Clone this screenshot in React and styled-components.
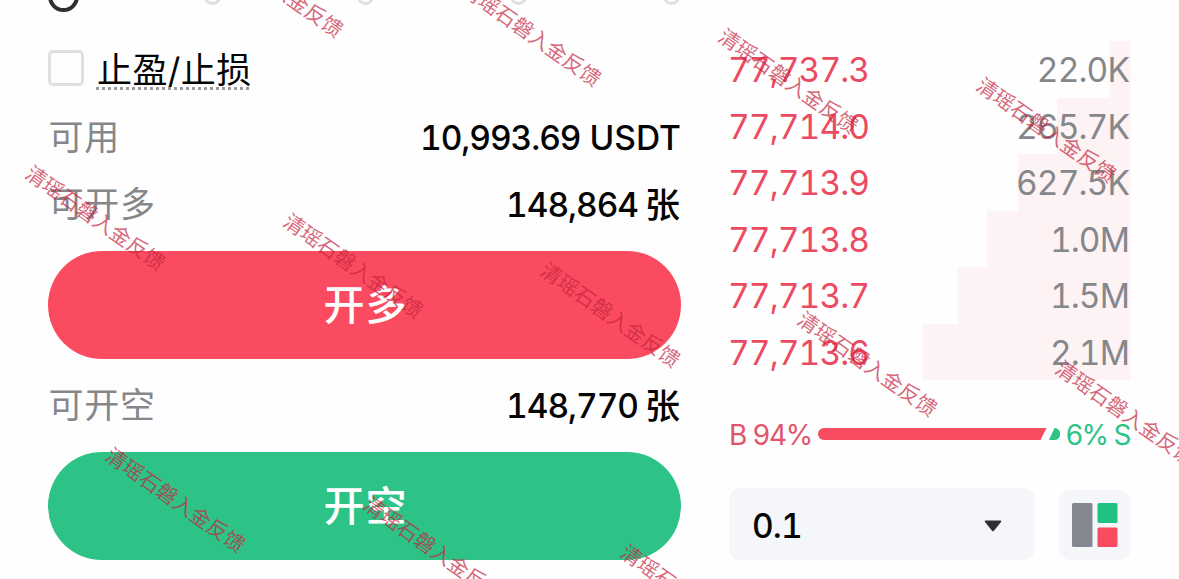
import React from "react";
import styled, { createGlobalStyle } from "styled-components";

const GlobalStyle = createGlobalStyle`
  * {
    box-sizing: border-box;
  }
  body {
    margin: 0;
    background: #fefefe;
    font-family: Inter, "Noto Sans CJK SC", sans-serif;
    overflow: hidden;
  }
`;

const Container = styled.div`
  position: relative;
  width: 1179px;
  height: 579px;
  display: flex;
  gap: 48px;
  padding-left: 48px;
  overflow: hidden;
`;

const OrderForm = styled.div`
  width: 633px;
  display: flex;
  flex-direction: column;
`;

const Steps = styled.div`
  height: 30px;
  margin-top: -18.5px;
  display: flex;
  align-items: center;
  gap: 136px;
`;

const Thumb = styled.div`
  width: 31px;
  height: 31px;
  margin-right: -11.5px;
  border: 4px solid #2e2e33;
  border-radius: 50%;
`;

const Step = styled.div`
  width: 17px;
  height: 17px;
  border: 3px solid #dedfe1;
  border-radius: 50%;
`;

const CheckRow = styled.label`
  height: 37px;
  margin-top: 38px;
  display: flex;
  align-items: center;
  gap: 12px;
`;

const Checkbox = styled.span`
  width: 36px;
  height: 36px;
  border: 3px solid #e0e0e0;
  border-radius: 5px;
`;

const CheckLabel = styled.span`
  width: 153px;
  height: 38px;
  margin-top: 6px;
  padding-left: 1px;
  font-size: 35px;
  line-height: 37px;
  letter-spacing: 0.4px;
  white-space: nowrap;
  color: #050505;
  background: repeating-linear-gradient(
      90deg,
      #9a9b9e 0 3px,
      transparent 3px 6px
    )
    0 100% / 100% 3px no-repeat;
`;

const InfoRow = styled.div`
  height: 67px;
  margin-top: ${(props) => props.$top || 0}px;
  display: flex;
  align-items: center;
  justify-content: space-between;
`;

const Label = styled.span`
  padding-left: 0.5px;
  font-size: 35px;
  line-height: 1;
  letter-spacing: 0.8px;
  color: #85878b;
`;

const Value = styled.span`
  display: flex;
  align-items: center;
  gap: ${(props) => props.$gap || 9}px;
  padding: 2px ${(props) => props.$right || 0}px 0 0;
  font-size: 33.5px;
  line-height: 1;
  font-weight: 500;
  letter-spacing: -1.05px;
  font-feature-settings: "tnum";
  color: #050505;
`;

const Unit = styled.span`
  font-size: ${(props) => props.$size || 33.5}px;
  letter-spacing: 0;
`;

const Submit = styled.button`
  height: 108px;
  margin: ${(props) => props.$top}px 0 0;
  padding: 1px 0 0 2px;
  border: none;
  border-radius: 54px;
  background: ${(props) => props.$bg};
  color: white;
  font-family: inherit;
  font-size: 41px;
  font-weight: 500;
  line-height: 1;
  letter-spacing: 1px;
`;

const Book = styled.div`
  width: 402px;
  padding-top: 41px;
  display: flex;
  flex-direction: column;
`;

const BookRow = styled.div`
  height: 56.5px;
  padding: 3px 2px 0 0;
  display: flex;
  align-items: center;
  justify-content: space-between;
  font-size: 33.5px;
  line-height: 1;
  letter-spacing: -0.9px;
  font-feature-settings: "tnum";
  background: linear-gradient(#fdf2f4, #fdf2f4) 100% 0 /
    ${(props) => props.$depth}px 100% no-repeat;
`;

const Price = styled.span`
  margin-left: -1px;
  color: #ec4a62;
`;

const Amount = styled.span`
  color: #85878b;
`;

const Ratio = styled.div`
  height: 30px;
  margin-top: 39px;
  display: flex;
  align-items: center;
  font-size: 28px;
  line-height: 1;
`;

const RatioText = styled.span`
  width: ${(props) => props.$width}px;
  padding-top: 1px;
  color: ${(props) => props.$color};
  letter-spacing: ${(props) => props.$spacing}px;
  white-space: nowrap;
  text-align: ${(props) => props.$align || "left"};
`;

const Controls = styled.div`
  margin-top: 39px;
  display: flex;
  align-items: flex-end;
  justify-content: space-between;
`;

const Select = styled.div`
  width: 306px;
  height: 72px;
  padding: 3px 33px 0 23px;
  display: flex;
  align-items: center;
  justify-content: space-between;
  border-radius: 12px;
  background: #f4f6f9;
  font-size: 33.5px;
  font-weight: 500;
  letter-spacing: -0.9px;
  font-feature-settings: "tnum";
  color: #050505;
`;

const LayoutButton = styled.div`
  width: 72px;
  height: 70px;
  display: flex;
  align-items: center;
  justify-content: center;
  border-radius: 12px;
  background: #f4f6f9;
`;

const Watermark = styled.span`
  position: absolute;
  left: ${(props) => props.$x}px;
  top: ${(props) => props.$y}px;
  font-family: "Noto Sans CJK SC", sans-serif;
  font-size: 20.6px;
  font-weight: 400;
  line-height: 1;
  white-space: nowrap;
  color: rgba(196, 36, 62, 0.7);
  transform: translate(-50%, -50%) rotate(35.2deg);
  pointer-events: none;
`;

const asks = [
  { price: "77,737.3", amount: "22.0K", depth: 21 },
  { price: "77,714.0", amount: "265.7K", depth: 74 },
  { price: "77,713.9", amount: "627.5K", depth: 113 },
  { price: "77,713.8", amount: "1.0M", depth: 144 },
  { price: "77,713.7", amount: "1.5M", depth: 173 },
  { price: "77,713.6", amount: "2.1M", depth: 208 },
];

const marks = [
  [274, -16],
  [531.5, 33],
  [789, 80],
  [1046.5, 129],
  [96, 216.5],
  [353.5, 265],
  [611, 313.5],
  [868, 362.5],
  [1125.5, 411.5],
  [176, 498.5],
  [433.5, 547.5],
  [690.5, 595.5],
];

function RatioBar() {
  return (
    <svg width="242" height="12" viewBox="0 0 242 12">
      <path d="M6 0H228.5L222.5 12H6A6 6 0 0 1 6 0Z" fill="#f74b60" />
      <path d="M236.5 0A6 6 0 0 1 236 12H231Z" fill="#2dc387" />
    </svg>
  );
}

export default function App() {
  return (
    <Container>
      <GlobalStyle />
      <OrderForm>
        <Steps>
          <Thumb />
          <Step />
          <Step />
          <Step />
          <Step />
        </Steps>
        <CheckRow>
          <Checkbox />
          <CheckLabel>止盈/止损</CheckLabel>
        </CheckRow>
        <InfoRow $top={17.5}>
          <Label>可用</Label>
          <Value>
            10,993.69<Unit>USDT</Unit>
          </Value>
        </InfoRow>
        <InfoRow>
          <Label>可开多</Label>
          <Value $gap={7} $right={1}>
            148,864<Unit $size={35}>张</Unit>
          </Value>
        </InfoRow>
        <Submit $bg="#fa4b60" $top={13}>
          开多
        </Submit>
        <InfoRow $top={13}>
          <Label>可开空</Label>
          <Value $gap={7} $right={1}>
            148,770<Unit $size={35}>张</Unit>
          </Value>
        </InfoRow>
        <Submit $bg="#2dc387" $top={13}>
          开空
        </Submit>
      </OrderForm>
      <Book>
        {asks.map((ask) => (
          <BookRow $depth={ask.depth} key={ask.price}>
            <Price>{ask.price}</Price>
            <Amount>{ask.amount}</Amount>
          </BookRow>
        ))}
        <Ratio>
          <RatioText $color="#e2546b" $width={89} $spacing={-1.2}>
            B 94%
          </RatioText>
          <RatioBar />
          <RatioText $color="#2dc387" $width={70} $spacing={-1.6} $align="right">
            6% S
          </RatioText>
        </Ratio>
        <Controls>
          <Select>
            0.1
            <svg width="18" height="12" viewBox="0 0 18 12">
              <path
                d="M1.5 0.5H16.5Q18 0.7 17 2L10 10.7Q9 11.8 8 10.7L1 2Q0 0.7 1.5 0.5Z"
                fill="#2e2f33"
              />
            </svg>
          </Select>
          <LayoutButton>
            <svg width="46" height="44" viewBox="0 0 46 44">
              <rect width="20.5" height="44" rx="1.5" fill="#84878f" />
              <rect x="25.5" width="20" height="20" rx="1.5" fill="#1fc283" />
              <rect x="25.5" y="24.5" width="20" height="19.5" rx="1.5" fill="#f74b60" />
            </svg>
          </LayoutButton>
        </Controls>
      </Book>
      {marks.map(([x, y]) => (
        <Watermark $x={x} $y={y} key={`${x}-${y}`}>
          清瑶石磐入金反馈
        </Watermark>
      ))}
    </Container>
  );
}
